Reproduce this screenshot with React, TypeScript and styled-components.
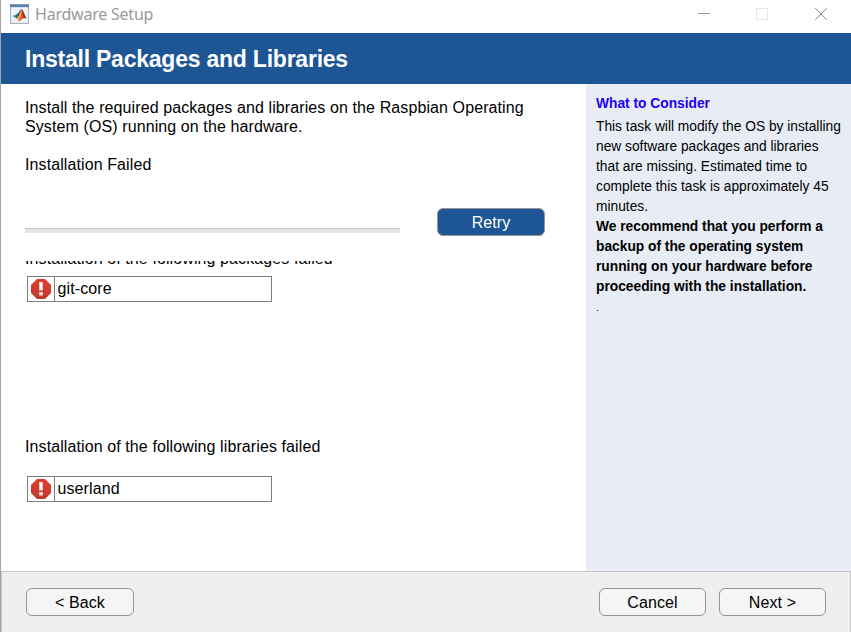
import React from "react";
import styled, { createGlobalStyle } from "styled-components";

const GlobalStyle = createGlobalStyle`
  * { box-sizing: border-box; }
  body { margin: 0; background: #fff; font-family: "Liberation Sans", Arial, sans-serif; color: #000; }
`;

const Window = styled.div`
  display: flex;
  flex-direction: column;
  width: 851px;
  height: 632px;
  overflow: hidden;
  background: #fff;
  border-left: 1px solid #a3a3a3;
`;

const TitleBar = styled.header`
  display: flex;
  align-items: center;
  height: 33px;
  flex: none;
  padding: 0 23px 4px 9px;
`;

const AppIcon = styled.svg`
  display: block;
  width: 19px;
  height: 20px;
  margin-bottom: 1px;
`;

const WindowTitle = styled.span`
  flex: 1;
  margin: 0 0 1px 6px;
  font: 16px/20px "Noto Sans", sans-serif;
  letter-spacing: -0.22px;
  color: #999;
`;

const WindowControls = styled.div`
  display: flex;
  gap: 46px;
  svg { display: block; width: 13px; height: 13px; }
`;

const Banner = styled.h1`
  flex: none;
  height: 51px;
  margin: 0;
  padding-left: 24px;
  background: #1d5595;
  color: #fff;
  font-size: 23px;
  line-height: 52px;
  letter-spacing: -0.23px;
`;

const Body = styled.div`
  display: flex;
  flex: none;
  height: 487px;
`;

const Main = styled.main`
  width: 585px;
  padding: 14px 0 0 24px;
  font-size: 16px;
  line-height: 19px;
  letter-spacing: 0.1px;
`;

const Text = styled.p<{ $gap?: number }>`
  margin: ${(p) => p.$gap ?? 0}px 0 0;
  white-space: nowrap;
`;

const ProgressRow = styled.div`
  display: flex;
  justify-content: space-between;
  align-items: flex-start;
  width: 520px;
  margin-top: 34px;
`;

const ProgressTrack = styled.div`
  width: 375px;
  height: 5px;
  margin-top: 20px;
  background: #e6e6e6;
  border-top: 1px solid #c8c8c8;
`;

const Button = styled.button<{ $primary?: boolean; $width?: number }>`
  width: ${(p) => p.$width ?? 108}px;
  height: 28px;
  padding: 1px 0 0;
  border: 1px solid #959595;
  border-radius: 6px;
  background: ${(p) => (p.$primary ? "#1d5595" : "#f5f5f5")};
  color: ${(p) => (p.$primary ? "#fff" : "#000")};
  font: 16px/25px "Liberation Sans", Arial, sans-serif;
  letter-spacing: 0.1px;
`;

const ClippedLabel = styled.div`
  display: flex;
  align-items: flex-end;
  height: 7px;
  margin-top: 25px;
  overflow: hidden;
`;

const ItemTable = styled.div<{ $gap: number }>`
  display: grid;
  grid-template-columns: 27px 1fr;
  width: 245px;
  height: 26px;
  margin: ${(p) => p.$gap}px 0 0 2px;
  border: 1px solid #808080;
`;

const IconCell = styled.div`
  padding: 2px 0 0 3px;
  border-right: 1px solid #808080;
  svg { display: block; width: 20px; height: 20px; }
`;

const NameCell = styled.div`
  padding-left: 2.5px;
  line-height: 23px;
`;

const Sidebar = styled.aside`
  flex: 1;
  padding: 10px 0 0 10px;
  background: #e8edf5;
  font-size: 13.78px;
  line-height: 20px;
  white-space: nowrap;
`;

const SideHeading = styled.h2`
  margin: 0 0 3px;
  color: #2000f4;
  font-size: 13.78px;
  line-height: 20px;
`;

const SideText = styled.p<{ $bold?: boolean }>`
  margin: 0;
  font-weight: ${(p) => (p.$bold ? 700 : 400)};
`;

const SideNote = styled(SideText)`
  font-size: 10px;
  line-height: 22px;
`;

const Footer = styled.footer`
  display: flex;
  gap: 13px;
  flex: 1;
  padding: 16px 24px 0 24px;
  background: #efefef;
  border: solid #c8c8c8;
  border-width: 1px 1px 0 1px;
`;

const Spacer = styled.div`
  flex: 1;
`;

function ErrorIcon() {
  return (
    <svg viewBox="0 0 20 20">
      <defs>
        <linearGradient id="stop" x1="0" y1="0" x2="0" y2="1">
          <stop offset="0" stopColor="#dc402e" />
          <stop offset="1" stopColor="#c4372a" />
        </linearGradient>
      </defs>
      <path d="M6 0h8l6 6v8l-6 6H6l-6-6V6z" fill="url(#stop)" />
      <path d="M8 3h4v8.5H8zM8 13h4v3.5H8z" fill="#efc4bd" />
      <path d="M9 3.5h2V11H9zM9 13.5h2V16H9z" fill="#fff" />
    </svg>
  );
}

function MatlabIcon() {
  return (
    <AppIcon viewBox="0 0 19 19" preserveAspectRatio="none">
      <rect x=".5" y=".5" width="18" height="18" fill="#f0f1f2" stroke="#aab1b8" />
      <path d="M0 0h19v3H0z" fill="#5685b3" />
      <path d="M0 0h19v1H0z" fill="#7c98b5" />
      <path d="M2.5 11.5L6.7 9.7 8.5 12 6 13.5z" fill="#3c91c8" />
      <path d="M6.7 9.7C9 9 9.8 5.2 11.5 5L8.5 12 6 13.5z" fill="#28577f" />
      <path d="M11.5 5c1.7 0 3 6 5 9-2-1.3-3.3-.8-4.5.3-1.2 1-2 2-3 2-.4-1.8-1-2.7-3-2.8C9 12.5 10 8 11.5 5z" fill="#d95b22" />
      <path d="M11.5 5c.3 3-1 7-2.5 11.2-.4-1.7-1-2.6-3-2.7C9 12.5 10 8 11.5 5z" fill="#f0a044" />
      <path d="M12 5.3c1.5 1.5 2.5 5.5 4.5 8.7-1.5-1-2.3-.8-3-.3z" fill="#8e2a20" />
    </AppIcon>
  );
}

function FailedItem({ name, gap }: { name: string; gap: number }) {
  return (
    <ItemTable $gap={gap}>
      <IconCell><ErrorIcon /></IconCell>
      <NameCell>{name}</NameCell>
    </ItemTable>
  );
}

export default function App() {
  return (
    <>
      <GlobalStyle />
      <Window>
        <TitleBar>
          <MatlabIcon />
          <WindowTitle>Hardware Setup</WindowTitle>
          <WindowControls>
            <svg viewBox="0 0 13 13"><path d="M1 5h12v1H1z" fill="#999" /></svg>
            <svg viewBox="0 0 13 13"><path d="M.5.5h11v11H.5z" fill="none" stroke="#e6e6e6" /></svg>
            <svg viewBox="0 0 13 13"><path d="M.2.2l11.6 11.6M11.8.2L.2 11.8" stroke="#8c8c8c" /></svg>
          </WindowControls>
        </TitleBar>
        <Banner>Install Packages and Libraries</Banner>
        <Body>
          <Main>
            <Text>Install the required packages and libraries on the Raspbian Operating<br />System (OS) running on the hardware.</Text>
            <Text $gap={19}>Installation Failed</Text>
            <ProgressRow>
              <ProgressTrack />
              <Button $primary>Retry</Button>
            </ProgressRow>
            <ClippedLabel><Text>Installation of the following packages failed</Text></ClippedLabel>
            <FailedItem name="git-core" gap={8} />
            <Text $gap={135}>Installation of the following libraries failed</Text>
            <FailedItem name="userland" gap={20} />
          </Main>
          <Sidebar>
            <SideHeading>What to Consider</SideHeading>
            <SideText>This task will modify the OS by installing<br />new software packages and libraries<br />that are missing. Estimated time to<br />complete this task is approximately 45<br />minutes.</SideText>
            <SideText $bold>We recommend that you perform a<br />backup of the operating system<br />running on your hardware before<br />proceeding with the installation.</SideText>
            <SideNote>.</SideNote>
          </Sidebar>
        </Body>
        <Footer>
          <Button>&lt; Back</Button>
          <Spacer />
          <Button $width={107}>Cancel</Button>
          <Button $width={107}>Next &gt;</Button>
        </Footer>
      </Window>
    </>
  );
}
